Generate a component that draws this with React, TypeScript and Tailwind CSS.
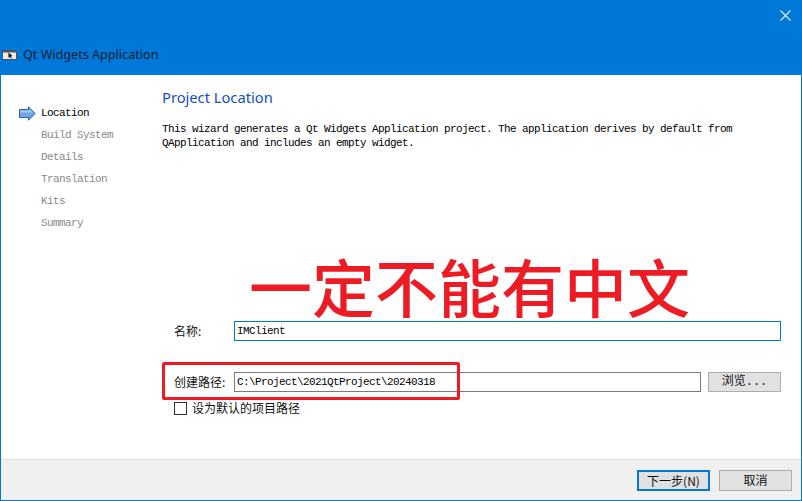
import React from "react";

const monoFont = "font-['Liberation_Mono','Noto_Sans_CJK_SC',monospace]";
const cjkFont = "font-['Noto_Sans_CJK_SC',sans-serif]";

const steps = ["Location", "Build System", "Details", "Translation", "Kits", "Summary"];

function StepArrow() {
  return (
    <svg width="17" height="15" viewBox="0 0 17 15" className="shrink-0">
      <path d="M0.5 3.5H9.5V0.8L16.2 7.5L9.5 14.2V11.5H0.5Z" fill="#6ea5e8" stroke="#3a5f94" strokeWidth="1" />
      <path d="M1.5 4.5H10.5V3L13.5 6.5H1.5Z" fill="#a5caf5" />
    </svg>
  );
}

function AppIcon() {
  return (
    <svg width="15" height="10" viewBox="0 0 15 10">
      <rect x="0.5" y="0.5" width="14" height="9" fill="#ececec" stroke="#4a5563" />
      <rect x="1" y="1" width="13" height="1.5" fill="#4a5563" />
      <path d="M6.5 2.5V8L7.9 6.8L9 8.5L9.9 8L8.9 6.3L10.5 6Z" fill="#111" />
    </svg>
  );
}

function DialogButton({ label, primary }: { label: string; primary?: boolean }) {
  return (
    <button
      className={`h-[21px] w-[73px] bg-[#e1e1e1] text-[12px] text-[#111] ${cjkFont} ${
        primary ? "border-2 border-[#0078d7]" : "border border-[#adadad]"
      }`}
    >
      {label}
    </button>
  );
}

export default function App() {
  return (
    <div className="relative flex h-[501px] w-[802px] flex-col overflow-hidden border-b border-l border-r border-[#0078d7] bg-white">
      {/* title bar */}
      <div className="-mx-px flex h-[75px] shrink-0 flex-col bg-[#0078d7]">
        <div className="flex justify-end pr-[11px] pt-[10px]">
          <svg width="11" height="11" viewBox="0 0 11 11" stroke="#e6f2fb" strokeWidth="1.1">
            <path d="M0.5 0.5L10.5 10.5M10.5 0.5L0.5 10.5" />
          </svg>
        </div>
        <div className="mt-[25px] flex items-center gap-[6px] pl-[2px]">
          <AppIcon />
          <span className="font-['Noto_Sans',sans-serif] text-[12.6px] leading-[18px] text-[#0b1c33]">
            Qt Widgets Application
          </span>
        </div>
      </div>

      <div className="flex min-h-0 flex-1">
        {/* wizard steps */}
        <div className={`w-[161px] shrink-0 pt-[27px] ${monoFont} text-[11px] tracking-[-0.6px]`}>
          {steps.map((step, i) => (
            <div key={step} className="flex h-[22px] items-center">
              <div className="flex w-[40px] shrink-0 justify-end pr-[5px]">{i === 0 && <StepArrow />}</div>
              <span className={i === 0 ? "text-black" : "text-[#8a8a8a]"}>{step}</span>
            </div>
          ))}
        </div>

        {/* page content */}
        <div className="flex min-w-0 flex-1 flex-col pr-[20px]">
          <div className="mt-[12px] font-['Noto_Sans',sans-serif] text-[14.7px] leading-[20px] text-[#0f4fc4]">
            Project Location
          </div>
          <p className={`mt-[15px] ${monoFont} text-[11px] leading-[14px] tracking-[-0.6px] text-black`}>
            This wizard generates a Qt Widgets Application project. The application derives by default from
            <br />
            QApplication and includes an empty widget.
          </p>

          <div className={`mt-[171px] flex h-[20px] items-center ${cjkFont} text-[12px] text-[#111]`}>
            <span className="w-[72px] pl-[12px]">名称:</span>
            <div className={`flex h-[20px] flex-1 items-center border border-[#0078d7] pl-[2px] pt-px ${monoFont} text-[11px] tracking-[-0.6px] text-black`}>
              IMClient
            </div>
          </div>

          <div className={`mt-[31px] flex h-[20px] items-center ${cjkFont} text-[12px] text-[#111]`}>
            <span className="w-[72px] pl-[12px] whitespace-nowrap">创建路径:</span>
            <div className={`flex h-[20px] flex-1 items-center border border-[#7a7a7a] pl-[2px] pt-px ${monoFont} text-[11px] tracking-[-0.6px] text-black`}>
              C:\Project\2021QtProject\20240318
            </div>
            <button className={`ml-[7px] h-[20px] w-[73px] border border-[#adadad] bg-[#e1e1e1] ${monoFont} text-[12px] text-[#111]`}>
              浏览...
            </button>
          </div>

          <div className={`mt-[8px] ml-[12px] flex items-center gap-[5px] ${cjkFont} text-[12px] leading-[16px] text-[#111]`}>
            <span className="h-[13px] w-[13px] border border-[#333] bg-white" />
            设为默认的项目路径
          </div>
        </div>
      </div>

      {/* footer */}
      <div className="flex h-[41px] shrink-0 items-center justify-end gap-[9px] border-t border-[#dfdfdf] bg-[#f0f0f0] pr-[9px]">
        <DialogButton label="下一步(N)" primary />
        <DialogButton label="取消" />
      </div>

      {/* red annotations drawn over the screenshot */}
      <div className={`absolute left-[248px] top-[253px] whitespace-nowrap ${cjkFont} text-[63px] font-medium leading-[64px] text-[#ed1c24]`}>
        一定不能有中文
      </div>
      <div className="absolute left-[161px] top-[362px] h-[38px] w-[298px] rounded-[2px] border-[3px] border-[#ed1c24]" />
    </div>
  );
}
